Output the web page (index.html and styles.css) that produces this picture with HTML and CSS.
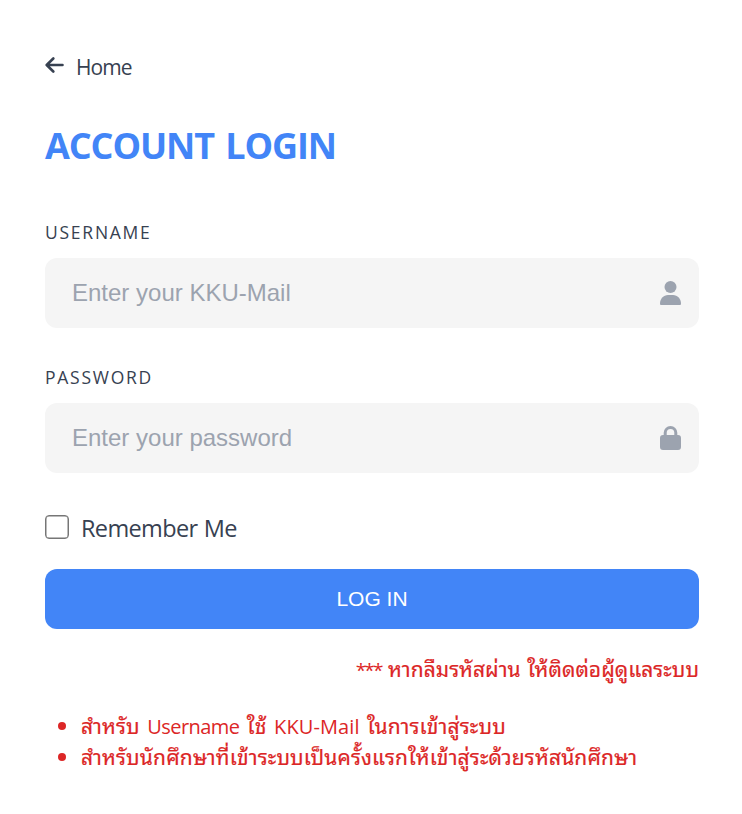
FILE: index.html
```html
<!DOCTYPE html>
<html lang="th">
<head>
<meta charset="utf-8">
<title>Account Login</title>
<link rel="stylesheet" href="styles.css">
</head>
<body>
<main class="login">
  <a class="home"><svg class="arrow" viewBox="0 0 20 18"><path d="M17.5 9H2M8.3 2.5L1.7 9l6.6 6.5"/></svg><span>Home</span></a>
  <h1 class="title">ACCOUNT LOGIN</h1>
  <label class="label" for="user">USERNAME</label>
  <div class="field">
    <input id="user" type="text" placeholder="Enter your KKU-Mail">
    <svg class="icon" viewBox="0 0 21 24"><circle cx="10.5" cy="6" r="6"/><path d="M0 22.7C0 17.5 3.5 14 8 14h5c4.5 0 8 3.5 8 8.7 0 .8-.5 1.3-1.3 1.3H1.3C.5 24 0 23.5 0 22.7z"/></svg>
  </div>
  <label class="label" for="pass">PASSWORD</label>
  <div class="field">
    <input id="pass" type="password" placeholder="Enter your password">
    <svg class="icon" viewBox="0 0 21 24"><path fill-rule="evenodd" d="M3.7 9V6.8a6.8 6.8 0 0 1 13.6 0V9H18a3 3 0 0 1 3 3v9a3 3 0 0 1-3 3H3a3 3 0 0 1-3-3v-9a3 3 0 0 1 3-3zm3 0h7.6V6.8a3.8 3.8 0 0 0-7.6 0z"/></svg>
  </div>
  <label class="remember"><span class="box"></span><span>Remember Me</span></label>
  <button class="submit" type="button">LOG IN</button>
  <p class="forgot"><span class="stars">***</span> หากลืมรหัสผ่าน ให้ติดต่อผู้ดูแลระบบ</p>
  <ul class="notes">
    <li>สำหรับ <span class="latin">Username</span> ใช้ <span class="latin mail">KKU-Mail</span> ในการเข้าสู่ระบบ</li>
    <li>สำหรับนักศึกษาที่เข้าระบบเป็นครั้งแรกให้เข้าสู่ระด้วยรหัสนักศึกษา</li>
  </ul>
</main>
</body>
</html>
```
FILE: styles.css
```css
* { box-sizing: border-box; }
body { margin: 0; background: #fff; color: #374151; font-family: "Open Sans", "Noto Sans", sans-serif; }
.login { padding: 51px 43px 0 45px; }
.home { display: flex; align-items: center; height: 30px; font-size: 21px; line-height: 28px; letter-spacing: -0.9px; }
.arrow { width: 20px; height: 18px; margin: -2px 11px 0 0; fill: none; stroke: #374151; stroke-width: 2.6; stroke-linecap: round; stroke-linejoin: round; }
.home span { padding-top: 1px; }
.title { margin: 37px 0 0; height: 56px; line-height: 56px; font-size: 36px; font-weight: 700; letter-spacing: -1.1px; word-spacing: 3px; color: #4285f7; }
.label { display: block; height: 28px; margin-top: 45px; line-height: 26px; font-size: 17.5px; letter-spacing: 1.75px; }
.field { display: flex; align-items: center; height: 70px; margin-top: 11px; padding: 0 18px 0 27px; background: #f5f5f5; border-radius: 12px; }
.field + .label { margin-top: 36px; }
input { flex: 1; min-width: 0; padding: 0; border: 0; background: none; font: 24px "Liberation Sans", sans-serif; }
input::placeholder { color: #9ca3af; opacity: 1; }
.icon { width: 21px; height: 24px; fill: #9ca3af; }
.remember { display: flex; align-items: center; height: 36px; margin-top: 37px; font-size: 23.5px; letter-spacing: -0.65px; word-spacing: 1px; }
.box { width: 24px; height: 24px; margin: -2px 12px 0 0; border: 1.5px solid #767676; border-radius: 4px; box-shadow: inset 0 0 0 0.5px #767676; }
.submit { display: block; width: 100%; height: 60px; margin-top: 23px; border: 0; border-radius: 12px; background: #4285f7; color: #fff; font: 21px "Liberation Sans", sans-serif; }
.forgot, .notes { color: #dc2626; font-family: "Open Sans", "Noto Sans Thai Looped", "Noto Looped Thai", Loma, Waree, Garuda, "Noto Sans Thai", sans-serif; font-size: 21px; letter-spacing: 0.14px; white-space: nowrap; -webkit-text-stroke: 0.2px #dc2626; }
.forgot { margin: 24px 0 0; height: 34px; line-height: 33px; text-align: right; letter-spacing: 0.03px; word-spacing: 1px; }
.stars { font-size: 19px; letter-spacing: -1.9px; -webkit-text-stroke: 0; }
.notes { margin: 23px 0 0; padding-left: 36px; word-spacing: 1.8px; }
.notes li { height: 31px; line-height: 31px; }
.notes li::marker { font-size: 22px; }
.latin { font-size: 20px; letter-spacing: -0.55px; -webkit-text-stroke: 0; }
.mail { letter-spacing: 0.1px; }
```
